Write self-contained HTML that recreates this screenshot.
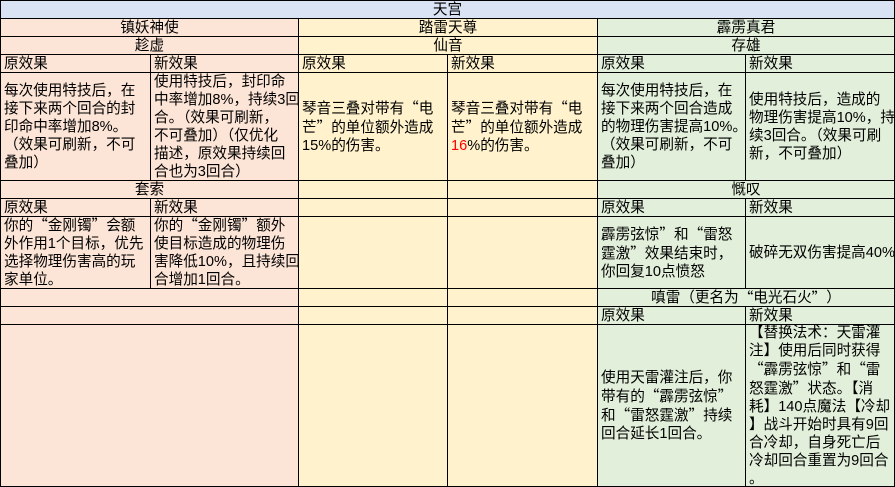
<!DOCTYPE html>
<html><head><meta charset="utf-8"><style>
body{margin:0;width:895px;height:487px;background:#fff;position:relative;overflow:hidden;font-family:"Liberation Sans","Noto Sans CJK SC",sans-serif;font-size:14.6px;color:#000}
.c{position:absolute;box-sizing:border-box;border:1px solid #000;display:flex;align-items:center;line-height:18px;white-space:nowrap;padding-left:3px;overflow:hidden}
.m{justify-content:center;padding-left:0}
.b{background:#dae3f3}.p{background:#fce4d6}.y{background:#fff2cc}.g{background:#e2efda}
.r{color:#f00}
q{quotes:none;font-family:"Noto Sans CJK SC",sans-serif;display:inline-block;width:14.6px;text-align:center}
q.o{text-align:right}q.e{text-align:left}
</style></head><body>
<div class="c b m" style="left:0;top:0;width:895px;height:19px">天宫</div>
<div class="c p m" style="left:0;top:18px;width:299px;height:19px">镇妖神使</div>
<div class="c y m" style="left:298px;top:18px;width:300px;height:19px">踏雷天尊</div>
<div class="c g m" style="left:597px;top:18px;width:298px;height:19px">霹雳真君</div>
<div class="c p m" style="left:0;top:36px;width:299px;height:19px">趁虚</div>
<div class="c y m" style="left:298px;top:36px;width:300px;height:19px">仙音</div>
<div class="c g m" style="left:597px;top:36px;width:298px;height:19px">存雄</div>

<div class="c p" style="left:0;top:54px;width:151px;height:19px">原效果</div>
<div class="c p" style="left:150px;top:54px;width:149px;height:19px">新效果</div>
<div class="c y" style="left:298px;top:54px;width:150px;height:19px">原效果</div>
<div class="c y" style="left:447px;top:54px;width:151px;height:19px">新效果</div>
<div class="c g" style="left:597px;top:54px;width:149px;height:19px">原效果</div>
<div class="c g" style="left:745px;top:54px;width:150px;height:19px">新效果</div>

<div class="c p" style="left:0;top:72px;width:151px;height:109px"><div>每次使用特技后，在<br>接下来两个回合的封<br>印命中率增加8%。<br>（效果可刷新，不可<br>叠加）</div></div>
<div class="c p" style="left:150px;top:72px;width:149px;height:109px"><div>使用特技后，封印命<br>中率增加8%，持续3回<br>合。（效果可刷新，<br>不可叠加）（仅优化<br>描述，原效果持续回<br>合也为3回合）</div></div>
<div class="c y" style="left:298px;top:72px;width:150px;height:109px"><div>琴音三叠对带有<q class="o">“</q>电<br>芒<q class="e">”</q>的单位额外造成<br>15%的伤害。</div></div>
<div class="c y" style="left:447px;top:72px;width:151px;height:109px"><div>琴音三叠对带有<q class="o">“</q>电<br>芒<q class="e">”</q>的单位额外造成<br><span class="r">16</span>%的伤害。</div></div>
<div class="c g" style="left:597px;top:72px;width:149px;height:109px"><div>每次使用特技后，在<br>接下来两个回合造成<br>的物理伤害提高10%。<br>（效果可刷新，不可<br>叠加）</div></div>
<div class="c g" style="left:745px;top:72px;width:150px;height:109px"><div>使用特技后，造成的<br>物理伤害提高10%，持<br>续3回合。（效果可刷<br>新，不可叠加）</div></div>

<div class="c p m" style="left:0;top:180px;width:299px;height:19px">套索</div>
<div class="c y" style="left:298px;top:180px;width:150px;height:19px"></div>
<div class="c y" style="left:447px;top:180px;width:151px;height:19px"></div>
<div class="c g m" style="left:597px;top:180px;width:298px;height:19px">慨叹</div>

<div class="c p" style="left:0;top:198px;width:151px;height:19px">原效果</div>
<div class="c p" style="left:150px;top:198px;width:149px;height:19px">新效果</div>
<div class="c y" style="left:298px;top:198px;width:150px;height:19px"></div>
<div class="c y" style="left:447px;top:198px;width:151px;height:19px"></div>
<div class="c g" style="left:597px;top:198px;width:149px;height:19px">原效果</div>
<div class="c g" style="left:745px;top:198px;width:150px;height:19px">新效果</div>

<div class="c p" style="left:0;top:216px;width:151px;height:73px"><div>你的<q class="o">“</q>金刚镯<q class="e">”</q>会额<br>外作用1个目标，优先<br>选择物理伤害高的玩<br>家单位。</div></div>
<div class="c p" style="left:150px;top:216px;width:149px;height:73px"><div>你的<q class="o">“</q>金刚镯<q class="e">”</q>额外<br>使目标造成的物理伤<br>害降低10%，且持续回<br>合增加1回合。</div></div>
<div class="c y" style="left:298px;top:216px;width:150px;height:73px"></div>
<div class="c y" style="left:447px;top:216px;width:151px;height:73px"></div>
<div class="c g" style="left:597px;top:216px;width:149px;height:73px"><div>霹雳弦惊<q class="e">”</q>和<q class="o">“</q>雷怒<br>霆激<q class="e">”</q>效果结束时，<br>你回复10点愤怒</div></div>
<div class="c g" style="left:745px;top:216px;width:150px;height:73px"><div>破碎无双伤害提高40%</div></div>

<div class="c p" style="left:0;top:288px;width:299px;height:19px"></div>
<div class="c y" style="left:298px;top:288px;width:150px;height:19px"></div>
<div class="c y" style="left:447px;top:288px;width:151px;height:19px"></div>
<div class="c g m" style="left:597px;top:288px;width:298px;height:19px">嗔雷（更名为<q class="o">“</q>电光石火<q class="e">”</q>）</div>

<div class="c p" style="left:0;top:306px;width:299px;height:19px"></div>
<div class="c y" style="left:298px;top:306px;width:150px;height:19px"></div>
<div class="c y" style="left:447px;top:306px;width:151px;height:19px"></div>
<div class="c g" style="left:597px;top:306px;width:149px;height:19px">原效果</div>
<div class="c g" style="left:745px;top:306px;width:150px;height:19px">新效果</div>

<div class="c p" style="left:0;top:324px;width:299px;height:163px"></div>
<div class="c y" style="left:298px;top:324px;width:150px;height:163px"></div>
<div class="c y" style="left:447px;top:324px;width:151px;height:163px"></div>
<div class="c g" style="left:597px;top:324px;width:149px;height:163px"><div>使用天雷灌注后，你<br>带有的<q class="o">“</q>霹雳弦惊<q class="e">”</q><br>和<q class="o">“</q>雷怒霆激<q class="e">”</q>持续<br>回合延长1回合。</div></div>
<div class="c g" style="left:745px;top:324px;width:150px;height:163px"><div>【替换法术：天雷灌<br>注】使用后同时获得<br><q class="o">“</q>霹雳弦惊<q class="e">”</q>和<q class="o">“</q>雷<br>怒霆激<q class="e">”</q>状态。【消<br>耗】140点魔法【冷却<br>】战斗开始时具有9回<br>合冷却，自身死亡后<br>冷却回合重置为9回合<br>。</div></div>
</body></html>
